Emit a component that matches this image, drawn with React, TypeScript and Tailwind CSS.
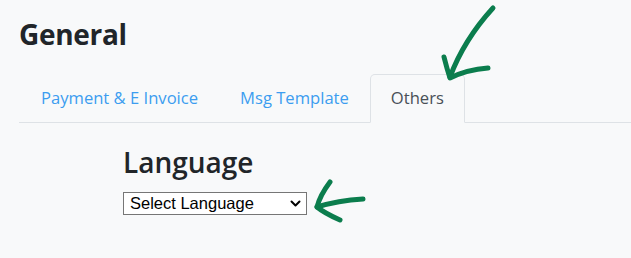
import React from "react";

export default function App() {
  return (
    <div
      className="relative w-[631px] h-[258px] overflow-hidden bg-[#f8f9fa] text-[#212529]"
      style={{ fontFamily: '"Open Sans", "Noto Sans", sans-serif' }}
    >
      <div className="pl-[19px] pt-[17px]">
        <h2 className="text-[28px] leading-[34px] font-bold tracking-[-0.3px]">General</h2>
        <div className="mt-[23px] flex border-b border-[#dee2e6] text-[16.6px] leading-[24px]">
          <div className="ml-px px-[20px] py-[11px] border border-transparent text-[#3c9df0]">Payment &amp; E Invoice</div>
          <div className="px-[20px] py-[11px] border border-transparent text-[#3c9df0]">Msg Template</div>
          <div className="-mb-px px-[20px] py-[11px] border border-[#dee2e6] border-b-[#f8f9fa] rounded-t-[5px] bg-[#f8f9fa] text-[#495057]">Others</div>
        </div>
        <div className="pl-[104px] pt-[22px]">
          <h3 className="text-[28px] leading-[34px] font-semibold">Language</h3>
          <div className="relative mt-[13px] w-[184px] h-[23px]">
            <select
              className="appearance-none block w-[184px] h-[23px] border border-[#767676] bg-white text-[16.5px] leading-[21px] text-black pl-[6px] rounded-none"
              style={{ fontFamily: '"Liberation Sans", Arial, sans-serif' }}
              defaultValue=""
            >
              <option value="">Select Language</option>
            </select>
            <svg
              className="pointer-events-none absolute left-[167px] top-[8px]"
              width="11"
              height="7"
              viewBox="0 0 11 7"
              fill="none"
              stroke="#000"
              strokeWidth="2"
              strokeLinecap="round"
              strokeLinejoin="round"
            >
              <path d="M1.5 1.5 L5.5 5.5 L9.5 1.5" />
            </svg>
          </div>
        </div>
      </div>
      <svg
        className="pointer-events-none absolute left-0 top-0"
        width="631"
        height="258"
        viewBox="0 0 631 258"
        fill="none"
        stroke="#0b7d4d"
        strokeWidth="5"
        strokeLinecap="round"
        strokeLinejoin="round"
      >
        <path d="M493 8 C482 20 462 45 450 77" />
        <path d="M444 57 C446 65 448 72 450 78 C462 72 475 69 488 68" />
        <path d="M317 207 C330 203 347 200 363 199" />
        <path d="M330 182 C324 190 319 199 317 207 C323 212 331 216 340 220" />
      </svg>
    </div>
  );
}
